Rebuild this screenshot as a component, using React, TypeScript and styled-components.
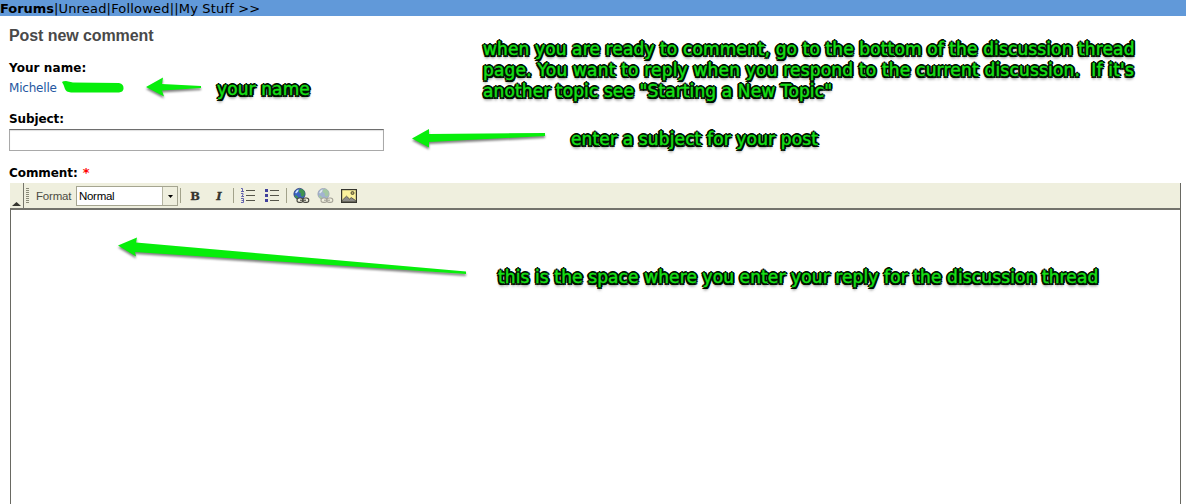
import React from "react";
import styled, { createGlobalStyle } from "styled-components";

const GlobalStyle = createGlobalStyle`
  html, body { margin: 0; background: #fff; overflow: hidden; }
  * { box-sizing: border-box; }
`;

const verdana = `Verdana, "DejaVu Sans", sans-serif`;
const arial = `Arial, "Liberation Sans", sans-serif`;

const Page = styled.div`
  position: relative;
  display: flex;
  flex-direction: column;
  width: 1186px;
  height: 504px;
  overflow: hidden;
  background: #fff;
  color: #000;
  font-family: ${verdana};
`;

const NavBar = styled.nav`
  flex: none;
  height: 16px;
  background: #6199d9;
  font-size: 13px;
  line-height: 17px;
  white-space: pre;
`;

const NavItem = styled.span<{ $bold?: boolean; $track?: number }>`
  font-weight: ${(p) => (p.$bold ? 700 : 400)};
  letter-spacing: ${(p) => p.$track ?? 0}px;
`;

const Form = styled.main`
  display: flex;
  flex-direction: column;
  flex: 1;
  padding: 10px 5px 0 9px;
`;

const Heading = styled.h2`
  margin: 0;
  height: 20px;
  font: 700 16px/20px ${arial};
  letter-spacing: -0.08px;
  color: #494949;
`;

const Label = styled.label<{ $top: number; $track?: number }>`
  margin-top: ${(p) => p.$top}px;
  height: 16px;
  font-size: 12px;
  font-weight: 700;
  line-height: 16px;
  letter-spacing: ${(p) => p.$track ?? 0}px;
`;

const Required = styled.span`
  margin-left: 5px;
  font-size: 13px;
  line-height: 1;
  color: #f00;
`;

const UserLine = styled.div`
  display: flex;
  align-items: center;
  margin-top: 4px;
  height: 16px;
`;

const UserName = styled.a`
  width: 52px;
  font-size: 12px;
  line-height: 16px;
  letter-spacing: -0.2px;
  color: #2456a0;
`;

const SubjectInput = styled.input`
  margin-top: 2px;
  width: 375px;
  height: 22px;
  padding: 0 4px;
  border: 1px solid #a9a9a9;
  border-top: 1px solid #6e6e6e;
  border-radius: 0;
  outline: none;
  box-shadow: inset 0 1px 1px #dedede;
`;

const Editor = styled.section`
  display: flex;
  flex-direction: column;
  flex: 1;
  margin: 2px 0 0 1px;
  border-right: 1px solid #696962;
`;

const Toolbar = styled.div`
  display: flex;
  height: 25px;
  background: #efefde;
`;

const Collapse = styled.div`
  display: flex;
  align-items: flex-end;
  justify-content: center;
  width: 14px;
  padding-bottom: 2px;
  border-right: 1px solid #77776c;
`;

const Grip = styled.div`
  margin: 5px 0 0 2px;
  width: 3px;
  height: 15px;
  background: repeating-linear-gradient(#8a8a78 0 1px, transparent 1px 2px);
`;

const FormatLabel = styled.span`
  margin-left: 7px;
  width: 40px;
  font: 11.5px/26px ${arial};
  letter-spacing: -0.2px;
  color: #4c4c44;
`;

const Select = styled.div`
  display: flex;
  justify-content: space-between;
  margin-top: 3px;
  width: 102px;
  height: 20px;
  border: 1px solid #a5a591;
  background: #fff;
`;

const SelectValue = styled.span`
  padding-left: 2px;
  font: 11.5px/19px ${arial};
  letter-spacing: -0.3px;
`;

const SelectArrow = styled.span`
  display: flex;
  align-items: center;
  justify-content: center;
  width: 15px;
  border-left: 1px solid #b5b5a2;
  background: #efefde;
`;

const Separator = styled.i<{ $left: number }>`
  margin: 5px 0 0 ${(p) => p.$left}px;
  width: 1px;
  height: 15px;
  background: #a2a28a;
`;

const ToolButton = styled.button<{ $left: number }>`
  display: flex;
  align-items: center;
  justify-content: center;
  margin: 5px 0 0 ${(p) => p.$left}px;
  width: 16px;
  height: 16px;
  padding: 0;
  border: 0;
  background: transparent;
`;

const Letter = styled.span<{ $italic?: boolean }>`
  font: ${(p) => (p.$italic ? "italic" : "normal")} 700 11.5px/16px "DejaVu Serif", serif;
  color: #35352e;
  -webkit-text-stroke: 0.3px #35352e;
`;

const TextArea = styled.div`
  flex: 1;
  border-top: 2px solid #73736c;
  border-left: 1px solid #696962;
  background: #fff;
`;

const Note = styled.p<{ $x: number; $y: number; $track?: number }>`
  position: absolute;
  left: ${(p) => p.$x}px;
  top: ${(p) => p.$y}px;
  margin: 0;
  font-size: 17px;
  line-height: 21px;
  letter-spacing: ${(p) => p.$track ?? 0.12}px;
  white-space: pre;
  color: #16e016;
  -webkit-text-stroke: 0.4px #16e016;
  text-shadow:
    2.1px 0 0.6px #001000, -2.1px 0 0.6px #001000, 0 2.1px 0.6px #001000, 0 -2.1px 0.6px #001000,
    1.5px 1.5px 0.6px #001000, -1.5px 1.5px 0.6px #001000, 1.5px -1.5px 0.6px #001000, -1.5px -1.5px 0.6px #001000,
    1px 0 0 #001000, -1px 0 0 #001000, 0 1px 0 #001000, 0 -1px 0 #001000,
    0 3px 3px rgba(0, 0, 0, 0.7);
`;

const NoteLine = styled.span<{ $track: number }>`
  display: block;
  letter-spacing: ${(p) => p.$track}px;
`;

const Marks = styled.svg`
  position: absolute;
  inset: 0;
  pointer-events: none;
  filter: drop-shadow(0 2px 1.2px rgba(0, 0, 0, 0.5));
`;

const Redaction = styled.svg`
  overflow: visible;
`;

const NumberedIcon = () => (
  <svg width="16" height="16" viewBox="0 0 16 16">
    <path d="M6 2.5h9M6 7.5h9M6 12.5h9" stroke="#55554a" />
    <path d="M1 .500h1.500v3M1 3.500h3M1 5.500h2v1.500L1.500 8.500h2.500M1 10.500h2.500v4H1M1.500 12.500h2" fill="none" stroke="#5252a8" strokeWidth=".9" />
  </svg>
);

const BulletIcon = () => (
  <svg width="16" height="16" viewBox="0 0 16 16">
    <path d="M6 2.5h9M6 7.5h9M6 12.5h9" stroke="#55554a" />
    <path d="M1 1h3v3H1zM1 6h3v3H1zM1 11h3v3H1z" fill="#40409c" />
  </svg>
);

const LinkIcon = ({ faded }: { faded?: boolean }) => (
  <svg width="16" height="16" viewBox="0 0 16 16" overflow="visible">
    <g opacity={faded ? 0.42 : 1}>
      <circle cx="6.500" cy="6" r="5.600" fill="#3a62c0" stroke="#283a78" strokeWidth=".8" />
      <path d="M6 1.500l3-.6 2.500 2.400.3 3.500-2.300 2.200-2-1.700.4-2-2.200-1z" fill="#3f9450" />
      <path d="M2 7l2 1 1.500 2-1 1.200L2 9z" fill="#3f9450" />
      <path d="M2.200 4.500L4 2l1.800-.4-.8 2.200L3 5.500z" fill="#cfe2ff" />
    </g>
    <g fill="none" stroke={faded ? "#a5a398" : "#45453e"} strokeWidth="1.100">
      <rect x="4" y="10" width="6" height="4.400" rx="2.200" fill="#efefde" />
      <rect x="9.800" y="10" width="6" height="4.400" rx="2.200" fill="#efefde" />
      <path d="M7 12.200h6" />
    </g>
  </svg>
);

const ImageIcon = () => (
  <svg width="16" height="16" viewBox="0 0 16 16">
    <rect x=".6" y="1.600" width="14.800" height="12.800" fill="#fbf29c" stroke="#35352e" strokeWidth="1.200" />
    <circle cx="11.500" cy="5" r="1.500" fill="#b5a860" stroke="#55503a" />
    <path d="M1.300 13.700v-1.500L5.500 8.200 8.500 11l1.800-1.400 4.400 3v1.100z" fill="#8c8c88" stroke="#4a4a44" strokeWidth=".8" />
  </svg>
);

export default function App() {
  return (
    <Page>
      <GlobalStyle />
      <NavBar>
        <NavItem $bold $track={-0.05}>Forums</NavItem>
        <NavItem $track={0.18}>|Unread|Followed||My Stuff &gt;&gt;</NavItem>
      </NavBar>
      <Form>
        <Heading>Post new comment</Heading>
        <Label $top={14} $track={0.08}>Your name:</Label>
        <UserLine>
          <UserName>Michelle</UserName>
          <Redaction width="64" height="14" viewBox="0 0 64 14">
            <path d="M1 1Q3 4 4 8Q5 11 10 11.500L58 11.500Q62 11 62.500 8Q63 3 58 2L12 1.500L5 0Q2 0 1 1Z" fill="#07ee0b" />
          </Redaction>
        </UserLine>
        <Label $top={15} $track={-0.1}>Subject:</Label>
        <SubjectInput />
        <Label $top={14} $track={-0.08}>
          Comment:<Required>*</Required>
        </Label>
        <Editor>
          <Toolbar>
            <Collapse>
              <svg width="9" height="4" viewBox="0 0 9 4">
                <path d="M0 4L4.500 0 9 4z" fill="#35352e" />
              </svg>
            </Collapse>
            <Grip />
            <FormatLabel>Format</FormatLabel>
            <Select>
              <SelectValue>Normal</SelectValue>
              <SelectArrow>
                <svg width="5" height="3" viewBox="0 0 5 3">
                  <path d="M0 0h5L2.500 3z" fill="#000" />
                </svg>
              </SelectArrow>
            </Select>
            <Separator $left={2} />
            <ToolButton $left={6}><Letter>B</Letter></ToolButton>
            <ToolButton $left={8}><Letter $italic>I</Letter></ToolButton>
            <Separator $left={6} />
            <ToolButton $left={6}><NumberedIcon /></ToolButton>
            <ToolButton $left={8}><BulletIcon /></ToolButton>
            <Separator $left={6} />
            <ToolButton $left={6}><LinkIcon /></ToolButton>
            <ToolButton $left={8}><LinkIcon faded /></ToolButton>
            <ToolButton $left={8}><ImageIcon /></ToolButton>
          </Toolbar>
          <TextArea />
        </Editor>
      </Form>
      <Marks width="1186" height="504" viewBox="0 0 1186 504">
        <g fill="#07ee0b">
          <path d="M146 87L163 77.500 162 84 201 86V88L162 90.500 164 96.500Z" />
          <path d="M412 138.500L429 129 429 134 545 133V136L429 142 429 147.500Z" />
          <path d="M118 245.500L137 237.500 136 242.500 466 271.500V274L135 252 136 256.500Z" />
        </g>
      </Marks>
      <Note $x={217} $y={79}>your name</Note>
      <Note $x={483} $y={39}>
        <NoteLine $track={0.13}>when you are ready to comment, go to the bottom of the discussion thread</NoteLine>
        <NoteLine $track={0.2}>page. You want to reply when you respond to the current discussion.  If it's</NoteLine>
        <NoteLine $track={0.12}>another topic see "Starting a New Topic"</NoteLine>
      </Note>
      <Note $x={571} $y={129} $track={0.15}>enter a subject for your post</Note>
      <Note $x={498} $y={267}>this is the space where you enter your reply for the discussion thread</Note>
    </Page>
  );
}
